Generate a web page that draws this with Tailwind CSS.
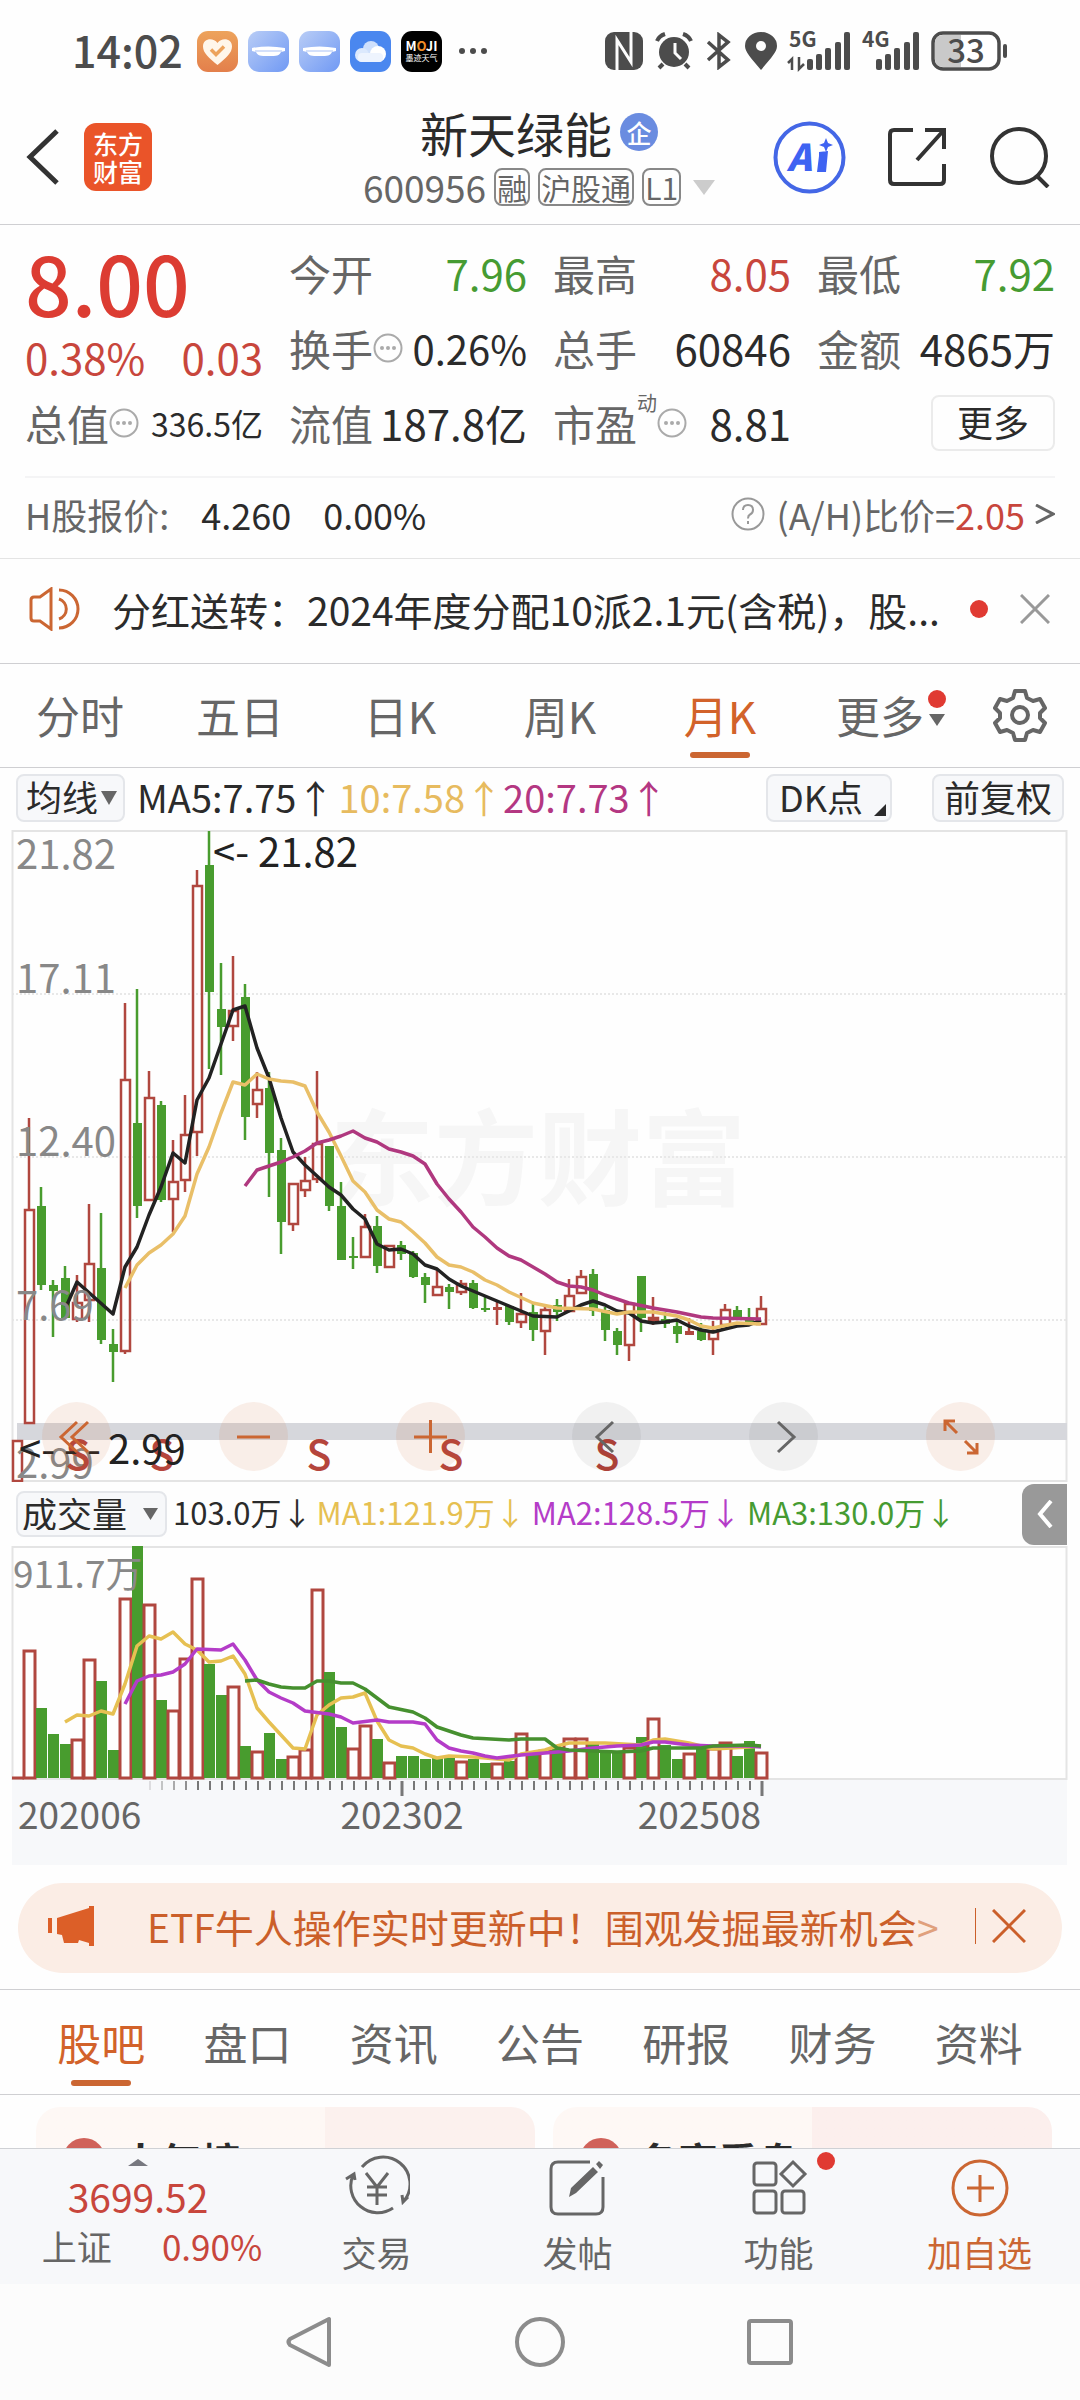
<!DOCTYPE html>
<html lang="zh-CN">
<head>
<meta charset="utf-8">
<meta name="viewport" content="width=device-width, initial-scale=1">
<title>新天绿能 600956</title>
<script src="https://cdn.jsdelivr.net/npm/@tailwindcss/browser@4"></script>
</head>
<body class="flex min-h-screen flex-col bg-[#fefefe] font-['Noto_Sans_CJK_SC',sans-serif] text-[#2b2b2b]">

<!-- Status bar -->
<div class="flex h-[102px] items-center justify-between pl-[72px] pr-[72px] text-[#4c4c4c]">
  <div class="flex items-center gap-[10px]">
    <span class="mr-1 pb-1 text-[43px] leading-[50px] font-medium">14:02</span>
    <svg class="size-[41px]" viewBox="0 0 41 41"><defs><linearGradient id="or" x2="0" y2="1"><stop stop-color="#eda35c"/><stop offset="1" stop-color="#e37f4b"/></linearGradient></defs><rect width="41" height="41" rx="11" fill="url(#or)"/><path d="M20.500 34C12 27 6 22 6 15.500c0-8 10-9.500 14.500-3.500C25 6 35 7.500 35 15.500 35 22 29 27 20.500 34Z" fill="#fff6ea"/><path d="m14 18.500 5 5 8-8" fill="none" stroke="#eda35c" stroke-width="3.500"/></svg>
    <svg class="size-[41px]" viewBox="0 0 41 41"><defs><linearGradient id="bl" x2="1" y2="1"><stop stop-color="#b9cdf6"/><stop offset="1" stop-color="#7099f4"/></linearGradient></defs><rect width="41" height="41" rx="11" fill="url(#bl)"/><path d="M4 17c11-2 22-2 33 0v3l-4 1c-2 4-4 4-12.500 4S10 25 8 21l-4-1Z" fill="#fff"/><path d="M7 20h27" stroke="#a9c1f5" stroke-width="1"/></svg>
    <svg class="size-[41px]" viewBox="0 0 41 41"><rect width="41" height="41" rx="11" fill="url(#bl)"/><path d="M4 17c11-2 22-2 33 0v3l-4 1c-2 4-4 4-12.500 4S10 25 8 21l-4-1Z" fill="#fff"/><path d="M7 20h27" stroke="#a9c1f5" stroke-width="1"/></svg>
    <svg class="size-[41px]" viewBox="0 0 41 41"><rect width="41" height="41" rx="11" fill="#4a87ef"/><circle cx="21" cy="18" r="8" fill="#cfe0fc"/><circle cx="12" cy="24" r="7" fill="#dce9fd"/><circle cx="28" cy="23" r="8" fill="#fff"/><rect x="8" y="22" width="25" height="9" rx="4" fill="#eef4fe"/></svg>
    <svg class="size-[41px]" viewBox="0 0 41 41"><rect width="41" height="41" rx="11" fill="#000"/><text x="20.500" y="20" text-anchor="middle" font-size="13" font-weight="700" fill="#fff">M<tspan fill="#f08c28">O</tspan>JI</text><text x="20.500" y="30" text-anchor="middle" font-size="8" fill="#fff">墨迹天气</text></svg>
    <svg class="ml-1 h-2 w-9" viewBox="0 0 36 8" fill="#4c4c4c"><circle cx="6" cy="4" r="3"/><circle cx="17" cy="4" r="3"/><circle cx="28" cy="4" r="3"/></svg>
  </div>
  <div class="flex items-center gap-3">
    <svg class="h-[38px] w-[38px]" viewBox="0 0 38 38"><rect width="38" height="38" rx="9" fill="#4c4c4c"/><path d="M12 38V8l14 22V0" fill="none" stroke="#fdfdfd" stroke-width="3"/></svg>
    <svg class="h-[38px] w-[38px]" viewBox="0 0 38 38" fill="none" stroke="#4c4c4c"><circle cx="19" cy="20" r="15" fill="#4c4c4c" stroke="none"/><path d="M2 9Q4 4 10 2M36 9Q34 4 28 2M8 32l-4 4M30 32l4 4" stroke-width="4"/><path d="M20 11v10l6 6" stroke="#fdfdfd" stroke-width="3"/></svg>
    <svg class="h-[38px] w-[28px]" viewBox="0 0 28 38" fill="none" stroke="#4c4c4c" stroke-width="3.500"><path d="m3 10 20 18-9 7V3l9 7L3 28"/></svg>
    <svg class="h-[38px] w-[32px]" viewBox="0 0 32 38"><path d="M16 38C6 26 0 20 0 14a16 14 0 0 1 32 0c0 6-6 12-16 24Z" fill="#4c4c4c"/><circle cx="16" cy="14" r="5" fill="#fdfdfd"/></svg>
    <svg class="h-[40px] w-[61px] overflow-visible" viewBox="0 0 61 40" fill="#4c4c4c"><text x="0" y="16" font-size="21" font-weight="700">5G</text><path d="M3 39V28l-4 4M10 26v12l5-5" fill="none" stroke="#4c4c4c" stroke-width="2.500"/><rect x="18" y="28" width="6" height="11" rx="2"/><rect x="27" y="23" width="6" height="16" rx="2"/><rect x="36" y="17" width="6" height="22" rx="2"/><rect x="46" y="11" width="6" height="28" rx="2"/><rect x="55" y="1" width="6" height="38" rx="2"/></svg>
    <svg class="h-[40px] w-[57px] overflow-visible" viewBox="0 0 57 40" fill="#4c4c4c"><text x="0" y="16" font-size="21" font-weight="700">4G</text><rect x="14" y="28" width="6" height="11" rx="2"/><rect x="23" y="23" width="6" height="16" rx="2"/><rect x="32" y="17" width="6" height="22" rx="2"/><rect x="42" y="11" width="6" height="28" rx="2"/><rect x="51" y="1" width="6" height="38" rx="2"/></svg>
    <svg class="h-[40px] w-[77px] overflow-visible" viewBox="0 0 77 40"><rect x="2" y="2" width="66" height="36" rx="10" fill="#fff" stroke="#4c4c4c" stroke-width="3.500"/><path d="M12 4h18v32H12q-8 0-8-8V12q0-8 8-8Z" fill="#c9c9c9"/><text x="35" y="32" text-anchor="middle" font-size="33" font-weight="500" fill="#4c4c4c">33</text><rect x="72" y="13" width="4" height="14" rx="2" fill="#4c4c4c"/></svg>
  </div>
</div>

<!-- Header -->
<header class="grid grid-cols-[1fr_auto_1fr] items-center border-b border-[#cfcfd2] pb-3 pl-[26px] pr-[28px]">
  <div class="flex items-center gap-6">
    <button aria-label="返回"><svg class="h-[56px] w-[34px]" viewBox="0 0 34 56" fill="none" stroke="#333" stroke-width="5"><path d="M31 2 4 28l27 26"/></svg></button>
    <a href="#" class="flex size-[68px] flex-col items-center justify-center rounded-xl bg-[#ea5429] text-[25px] leading-[28px] font-medium text-white"><span>东方</span><span>财富</span></a>
  </div>
  <div class="flex flex-col items-center">
    <h1 class="flex items-center gap-2 text-[48px] leading-[60px]">新天绿能<span class="flex size-[38px] items-center justify-center rounded-full bg-[#6a8ce0] text-[25px] leading-none font-medium text-white">企</span></h1>
    <button class="flex items-center gap-2 text-[37px] leading-[50px] text-[#666]">600956
      <span class="rounded-lg border-2 border-[#888] px-px text-[30px] leading-[34px]">融</span>
      <span class="rounded-lg border-2 border-[#888] px-px text-[30px] leading-[34px]">沪股通</span>
      <span class="rounded-lg border-2 border-[#888] px-px text-[30px] leading-[34px]">L1</span>
      <svg class="ml-1 h-[15px] w-[22px]" viewBox="0 0 22 15" fill="#ccc"><path d="M0 0h22L11 15Z"/></svg>
    </button>
  </div>
  <div class="flex items-center justify-end gap-[42px]">
    <button aria-label="Ai"><svg class="size-[73px]" viewBox="0 0 73 73"><circle cx="36.500" cy="36.500" r="34" fill="#fff" stroke="#4467e6" stroke-width="4"/><text x="14" y="50" font-family="Noto Sans CJK SC" font-size="37" font-weight="900" font-style="italic" fill="#3f63f2">A</text><path d="m46 31 9-1-2 21h-9l2-16Zm7-14 2 5 5 2-5 2-2 5-2-5-5-2 5-2Z" fill="#3f63f2"/></svg></button>
    <button aria-label="分享"><svg class="size-[60px]" viewBox="0 0 60 60" fill="none" stroke="#333" stroke-width="4"><path d="M25 3H6q-4 0-4 4v46q0 4 4 4h46q4 0 4-4V37M37 3h19v19M56 3 29 33"/></svg></button>
    <button aria-label="搜索"><svg class="size-[62px]" viewBox="0 0 62 62" fill="none" stroke="#333" stroke-width="4"><circle cx="29" cy="30" r="27"/><path d="m47 50 11 11"/></svg></button>
  </div>
</header>

<!-- Quote -->
<section class="px-[25px] pt-[10px]">
  <dl class="grid auto-rows-[75px] grid-cols-4 items-center gap-x-[26px] pb-4 text-[42px] leading-[60px] text-[#666]">
    <div class="row-span-2 flex flex-col pt-1 text-[#c8463c]">
      <dd class="text-[82px] leading-[90px] font-medium text-[#dc3c32]">8.00</dd>
      <dd class="flex justify-between"><span>0.38%</span><span>0.03</span></dd>
    </div>
    <div class="flex justify-between"><dt>今开</dt><dd class="text-[#469b32]">7.96</dd></div>
    <div class="flex justify-between"><dt>最高</dt><dd class="text-[#c8463c]">8.05</dd></div>
    <div class="flex justify-between"><dt>最低</dt><dd class="text-[#469b32]">7.92</dd></div>
    <div class="flex justify-between whitespace-nowrap"><dt class="flex items-center">换手<svg class="size-[30px]" viewBox="0 0 30 30" fill="#aaa"><circle cx="15" cy="15" r="13.500" fill="none" stroke="#aaa" stroke-width="2"/><circle cx="9" cy="15" r="2"/><circle cx="15" cy="15" r="2"/><circle cx="21" cy="15" r="2"/></svg></dt><dd class="text-[40px] text-[#2b2b2b]">0.26%</dd></div>
    <div class="flex justify-between"><dt>总手</dt><dd class="text-[#2b2b2b]">60846</dd></div>
    <div class="flex justify-between"><dt>金额</dt><dd class="text-[#2b2b2b]">4865万</dd></div>
    <div class="flex items-center justify-between whitespace-nowrap"><dt class="flex items-center">总值<svg class="size-[30px]" viewBox="0 0 30 30" fill="#aaa"><circle cx="15" cy="15" r="13.500" fill="none" stroke="#aaa" stroke-width="2"/><circle cx="9" cy="15" r="2"/><circle cx="15" cy="15" r="2"/><circle cx="21" cy="15" r="2"/></svg></dt><dd class="text-[32px] text-[#2b2b2b]">336.5亿</dd></div>
    <div class="flex justify-between whitespace-nowrap"><dt>流值</dt><dd class="text-[#2b2b2b]">187.8亿</dd></div>
    <div class="flex justify-between"><dt class="flex items-center">市盈<span class="self-start text-[20px] leading-[20px]">动</span><svg class="size-[30px]" viewBox="0 0 30 30" fill="#aaa"><circle cx="15" cy="15" r="13.500" fill="none" stroke="#aaa" stroke-width="2"/><circle cx="9" cy="15" r="2"/><circle cx="15" cy="15" r="2"/><circle cx="21" cy="15" r="2"/></svg></dt><dd class="text-[#2b2b2b]">8.81</dd></div>
    <div class="flex justify-end"><button class="h-[56px] w-[124px] rounded-lg border-2 border-[#ebebeb] pb-1 text-[36px] leading-none text-[#2b2b2b]">更多</button></div>
  </dl>
  <div class="flex h-[82px] items-center justify-between border-t-2 border-[#f4f4f5] pb-2 text-[36px] text-[#666]">
    <p class="flex gap-8">H股报价: <span class="text-[#2b2b2b]">4.260</span><span class="text-[#2b2b2b]">0.00%</span></p>
    <a href="#" class="flex items-center"><svg class="mr-3 size-[34px]" viewBox="0 0 34 34" fill="none" stroke="#999" stroke-width="2"><circle cx="17" cy="17" r="15.500"/><path d="M12 13q0-5 5-5t5 5q0 3-3 4.500-2 1-2 4M17 24v3"/></svg>(A/H)比价=<span class="text-[#c8463c]">2.05</span><svg class="ml-[10px] h-5 w-5" viewBox="0 0 20 20" fill="none" stroke="#666" stroke-width="3"><path d="m1 1 17 9-17 9"/></svg></a>
  </div>
</section>

<!-- Notice -->
<div class="flex h-[106px] items-center border-t border-b border-t-[#e4e4e4] border-b-[#cfcfd2] pb-1 pl-[28px] pr-[30px]">
  <svg class="h-[44px] w-[52px] shrink-0" viewBox="0 0 52 44" fill="none" stroke="#cb6632" stroke-width="3"><path d="M3 13v18q0 3 3 3h6l11 8V2L12 10H6q-3 0-3 3ZM31 3a19 19 0 0 1 0 38M31 12a10.500 10.500 0 0 1 0 20"/></svg>
  <a href="#" class="mr-7 ml-8 flex-1 truncate text-[39px]">分红送转：2024年度分配10派2.1元(含税)，股...</a>
  <span class="mr-8 size-[18px] shrink-0 rounded-full bg-[#e03a32]"></span>
  <button aria-label="关闭公告"><svg class="size-[30px]" viewBox="0 0 30 30" stroke="#999" stroke-width="3"><path d="m1 1 28 28M29 1 1 29"/></svg></button>
</div>

<!-- Period tabs -->
<nav class="flex h-[104px] border-b border-[#cfcfd2] pb-px text-[44px] text-[#666]">
  <a href="#" class="flex flex-4 items-center justify-center">分时</a>
  <a href="#" class="flex flex-4 items-center justify-center">五日</a>
  <a href="#" class="flex flex-4 items-center justify-center">日K</a>
  <a href="#" class="flex flex-4 items-center justify-center">周K</a>
  <a href="#" class="relative flex flex-4 items-center justify-center text-[#d2622a]">月K<span class="absolute bottom-2 h-[6px] w-[60px] rounded-full bg-[#cb6632]"></span></a>
  <a href="#" class="flex flex-4 items-center justify-center"><span class="relative">更多<span class="absolute top-2 left-full ml-1 flex flex-col items-center gap-[6px]"><span class="size-[18px] rounded-full bg-[#e03a32]"></span><svg class="h-3 w-4" viewBox="0 0 16 12" fill="#666"><path d="M0 0h16L8 12Z"/></svg></span></span></a>
  <button aria-label="设置" class="flex flex-3 items-center justify-center"><svg class="size-[54px]" viewBox="0 0 54 54" fill="none" stroke="#666" stroke-width="4" stroke-linejoin="round"><path d="M22 3h10l2 7 6 3 7-2 5 9-5 5v5l5 5-5 9-7-2-6 3-2 7H22l-2-7-6-3-7 2-5-9 5-5v-5l-5-5 5-9 7 2 6-3Z"/><circle cx="27" cy="27" r="8"/></svg></button>
</nav>

<!-- Moving average row -->
<div class="flex h-[62px] items-center pr-4 pb-[2px] pl-4 text-[38px] leading-[44px]">
  <label class="relative mr-3 block h-[48px] w-[109px]"><span class="sr-only">主图指标</span><select class="size-full appearance-none rounded-lg border-2 border-[#e4e6ea] bg-[#f7f8fa] pb-1 pl-2 text-[36px] leading-none"><option>均线</option></select><svg class="pointer-events-none absolute top-[17px] right-2 h-[14px] w-4" viewBox="0 0 16 14" fill="#666"><path d="M0 0h16L8 14Z"/></svg></label>
  <span class="mr-1 pb-[2px]">MA5:7.75↑</span><span class="pb-[2px] text-[#e7bb5f]">10:7.58↑</span><span class="pb-[2px] text-[#b43782]">20:7.73↑</span>
  <button class="relative ml-auto h-[48px] w-[126px] rounded-lg border-2 border-[#e4e6ea] bg-[#f7f8fa] pr-4 pb-1 text-[36px] leading-none">DK点<svg class="absolute right-1 bottom-1 size-3" viewBox="0 0 12 12" fill="#2b2b2b"><path d="M12 0v12H0Z"/></svg></button>
  <button class="ml-10 h-[48px] w-[132px] rounded-lg border-2 border-[#e4e6ea] bg-[#f7f8fa] pb-1 text-[36px] leading-none">前复权</button>
</div>

<!-- Price chart -->
<div class="relative">
  <svg id="price" class="block h-auto w-full" viewBox="0 830 1080 652" font-family="Noto Sans CJK SC" font-size="40">
    <text x="330" y="1198" font-size="104" font-weight="700" fill="#f6f6f6">东方财富</text>
    <path d="M12 994h1055M12 1157h1055M12 1320h1055" stroke="#e8e8e8" stroke-width="2" stroke-dasharray="2 2"/>
    <path d="M12.500 831h1054v650h-1054Z" fill="none" stroke="#e4e4e4" stroke-width="2"/>
    <path d="M17 1423h1050v17H17Z" fill="#d6d7dc"/>
    <g id="candles" stroke-width="2.500"></g>
    <g fill="none" stroke-width="3.500" stroke-linejoin="round">
      <polyline stroke="#222" points="66,1307 77,1282 113,1314 125,1267 137,1247 149,1215 161,1187 173,1153 185,1163 197,1100 209,1078 221,1044 233,1010 245,1006 257,1048 269,1078 281,1118 293,1152 305,1165 329,1187 341,1195 353,1209 365,1219 377,1244 389,1250 401,1249 413,1254 425,1265 437,1269 449,1279 461,1286 485,1296 509,1306 533,1316 557,1317 569,1311 581,1305 593,1301 605,1305 617,1311 629,1313 641,1321 653,1323 665,1322 677,1320 689,1326 701,1330 713,1332 737,1326 749,1325 761,1320"/>
      <polyline stroke="#e9bf68" points="125,1288 137,1265 149,1253 161,1245 173,1234 185,1216 197,1174 209,1147 221,1113 233,1082 245,1085 257,1074 269,1079 281,1081 293,1082 305,1086 317,1112 329,1132 341,1156 353,1181 365,1192 377,1210 389,1219 401,1222 413,1232 425,1243 437,1257 449,1265 461,1267 473,1272 485,1280 497,1285 509,1292 533,1303 557,1308 593,1309 617,1314 629,1312 653,1312 677,1316 689,1320 701,1326 713,1328 737,1323 761,1324"/>
      <polyline stroke="#b0387f" points="245,1186 257,1170 281,1162 293,1157 305,1151 317,1143 329,1140 341,1136 353,1131 365,1138 377,1142 389,1149 401,1152 413,1156 425,1164 437,1184 449,1199 461,1212 473,1227 485,1237 497,1248 509,1256 521,1260 533,1267 545,1274 557,1282 569,1286 581,1287 593,1290 605,1295 629,1303 653,1308 677,1312 701,1317 713,1318 761,1319"/>
    </g>
    <g fill="#888"><text x="16" y="869">21.82</text><text x="16" y="993">17.11</text><text x="16" y="1156">12.40</text><text x="16" y="1320">7.69</text><text x="16" y="1478">2.99</text></g>
    <g fill="#b5453c" font-weight="500" font-size="41" text-anchor="middle"><text x="78" y="1470">S</text><text x="162" y="1470">S</text><text x="319" y="1470">S</text><text x="451" y="1470">S</text><text x="607" y="1470">S</text></g>
    <g fill="#222"><text x="213" y="867">&lt;-<tspan x="258">21.82</tspan></text><text x="19" y="1464">&lt;- - -<tspan x="108">2.99</tspan></text></g>
  </svg>
  <div class="absolute right-[85px] bottom-[11px] left-[42px] flex justify-between">
    <button aria-label="最早" class="rounded-full bg-[#d2622a]/10"><svg class="size-[69px]" viewBox="0 0 69 69" fill="none" stroke="#cb6632" stroke-width="3"><path d="M35 20 19 35l16 15M46 20 30 35l16 15"/></svg></button>
    <button aria-label="缩小" class="rounded-full bg-[#d2622a]/10"><svg class="size-[69px]" viewBox="0 0 69 69" stroke="#cb6632" stroke-width="3"><path d="M18 35h33"/></svg></button>
    <button aria-label="放大" class="rounded-full bg-[#d2622a]/10"><svg class="size-[69px]" viewBox="0 0 69 69" stroke="#cb6632" stroke-width="3"><path d="M18 35h33M34.500 18v33"/></svg></button>
    <button aria-label="左移" class="rounded-full bg-black/5"><svg class="size-[69px]" viewBox="0 0 69 69" fill="none" stroke="#666" stroke-width="3"><path d="M41 20 25 35l16 15"/></svg></button>
    <button aria-label="右移" class="rounded-full bg-black/5"><svg class="size-[69px]" viewBox="0 0 69 69" fill="none" stroke="#666" stroke-width="3"><path d="m29 20 16 15-16 15"/></svg></button>
    <button aria-label="全屏" class="rounded-full bg-[#d2622a]/10"><svg class="size-[69px]" viewBox="0 0 69 69" fill="none" stroke="#cb6632" stroke-width="3"><path d="M19 29V19h10M19 19l12 12M51 41v10H41M51 51 39 39"/></svg></button>
  </div>
</div>

<!-- Volume row -->
<div class="flex h-[64px] items-center pl-4 pr-[13px] text-[31px] leading-[40px] whitespace-nowrap">
  <label class="relative mr-[6px] block h-[46px] w-[151px]"><span class="sr-only">副图指标</span><select class="size-full appearance-none rounded-lg border-2 border-[#e4e6ea] bg-[#f7f8fa] pb-1 pl-[4px] text-[35px] leading-none"><option>成交量</option></select><svg class="pointer-events-none absolute top-[17px] right-[9px] h-3 w-[15px]" viewBox="0 0 15 12" fill="#666"><path d="M0 0h15L7.500 12Z"/></svg></label>
  <span class="mr-1 pb-1">103.0万↓</span><span class="mr-[6px] pb-1 text-[#e6c052]">MA1:121.9万↓</span><span class="mr-[6px] pb-1 text-[#b43cc8]">MA2:128.5万↓</span><span class="pb-1 text-[#469b32]">MA3:130.0万↓</span>
  <button aria-label="展开" class="ml-auto flex h-[61px] w-[45px] items-center justify-center rounded-l-xl bg-[#999]"><svg class="h-[28px] w-4" viewBox="0 0 16 28" fill="none" stroke="#fff" stroke-width="4"><path d="M14 1 3 14l11 13"/></svg></button>
</div>

<!-- Volume chart -->
<svg class="block h-auto w-full" viewBox="0 1546 1080 319" font-family="Noto Sans CJK SC" font-size="37">
  <path d="M12 1780h1055v85H12Z" fill="#f7f8fa"/>
  <path d="M12.500 1547h1054v232h-1054Z" fill="none" stroke="#e4e4e4" stroke-width="2"/>
  <g id="volumes" stroke-width="3"></g>
  <g fill="none" stroke-width="3.500" stroke-linejoin="round">
    <polyline stroke="#e6c052" points="65,1722 77,1715 89,1716 101,1711 113,1714 125,1684 137,1646 149,1636 161,1639 173,1632 185,1644 197,1650 209,1662 221,1661 233,1656 245,1674 257,1708 269,1722 281,1735 293,1748 305,1749 317,1715 329,1705 341,1698 353,1697 365,1693 377,1721 389,1740 401,1746 413,1748 425,1754 437,1758 449,1756 473,1757 509,1760 521,1754 545,1750 557,1746 569,1743 605,1743 641,1745 653,1740 665,1739 689,1743 701,1746 713,1749 749,1747 761,1746"/>
    <polyline stroke="#b43cc8" points="125,1704 137,1681 149,1676 161,1675 173,1672 185,1664 197,1649 221,1650 233,1644 245,1660 257,1680 269,1692 281,1698 293,1703 305,1711 329,1714 341,1717 353,1723 377,1720 389,1722 413,1722 425,1724 437,1740 449,1748 461,1751 473,1753 485,1756 497,1758 521,1755 545,1753 569,1751 593,1748 617,1746 641,1745 653,1742 665,1742 689,1745 713,1746 749,1746 761,1747"/>
    <polyline stroke="#46902f" points="245,1681 257,1680 269,1684 281,1687 293,1688 305,1688 317,1681 329,1681 341,1683 353,1683 365,1689 377,1698 389,1707 413,1712 425,1718 437,1727 461,1735 473,1738 509,1740 521,1739 545,1739 557,1748 569,1750 593,1751 617,1752 641,1751 653,1748 701,1748 713,1746 749,1745 761,1746"/>
  </g>
  <g id="ticks" stroke="#777"></g>
  <text x="13" y="1588" fill="#888">911.7万</text>
  <g fill="#666"><text x="18" y="1829">202006</text><text x="402" y="1829" text-anchor="middle">202302</text><text x="761" y="1829" text-anchor="end">202508</text></g>
</svg>

<!-- Promo banner -->
<div class="mx-[18px] mt-[18px] flex h-[90px] items-center rounded-full bg-[#fbede5] pr-9 pb-1 pl-[30px] text-[39px] text-[#cb5f2a]">
  <svg class="h-[40px] w-[46px] shrink-0" viewBox="0 0 46 40" fill="#dc5f28"><path d="M0 12h4v15H0ZM9 12l32-10V0h5v40h-5v-3l-10-3-1 3H16l-2-8-5-1Z"/></svg>
  <a href="#" class="ml-[53px] flex-1 truncate">ETF牛人操作实时更新中！围观发掘最新机会<span class="text-[#e0a07c]">&gt;</span></a>
  <span class="mx-4 h-9 w-px bg-[#cb5f2a]"></span>
  <button aria-label="关闭"><svg class="size-[34px]" viewBox="0 0 34 34" stroke="#cb5f2a" stroke-width="3"><path d="m1 1 32 32M33 1 1 33"/></svg></button>
</div>

<!-- Content tabs -->
<nav class="mt-4 flex h-[106px] border-y border-[#cfcfd2] px-7 text-[44px] text-[#666]">
  <a href="#" class="relative flex flex-1 items-center justify-center text-[#d2622a]">股吧<span class="absolute bottom-2 h-[6px] w-[60px] rounded-full bg-[#cb6632]"></span></a>
  <a href="#" class="flex flex-1 items-center justify-center">盘口</a>
  <a href="#" class="flex flex-1 items-center justify-center">资讯</a>
  <a href="#" class="flex flex-1 items-center justify-center">公告</a>
  <a href="#" class="flex flex-1 items-center justify-center">研报</a>
  <a href="#" class="flex flex-1 items-center justify-center">财务</a>
  <a href="#" class="flex flex-1 items-center justify-center">资料</a>
</nav>

<!-- Cards cut off by the bottom bar -->
<div class="grid h-[53px] grid-cols-2 items-start gap-[18px] overflow-hidden pt-3 pr-7 pl-9 text-[40px] leading-[44px] font-bold">
  <a href="#" class="flex h-[120px] items-start gap-4 rounded-3xl bg-linear-to-r from-[#fef8f5] from-58% to-[#fcf1ee] to-58% pt-[31px] pl-[27px]"><span class="size-[42px] rounded-full bg-[#d0625a]"></span>人气榜</a>
  <a href="#" class="flex h-[120px] items-start gap-4 rounded-3xl bg-linear-to-r from-[#fef8f5] from-52% to-[#fcefed] to-52% pt-[31px] pl-[27px]"><span class="size-[42px] rounded-full bg-[#d0625a]"></span>名家看盘</a>
</div>

<!-- Bottom bar -->
<footer class="flex h-[136px] border-t border-[#cfd1d5] bg-[#f7f8fa] text-[35px] leading-[44px] text-[#666]">
  <a href="#" class="flex w-[276px] flex-col items-center pt-[10px] text-[#c8463c]">
    <svg class="h-[7px] w-5 shrink-0" viewBox="0 0 20 7" fill="#77787f"><path d="M10 0 20 7H0Z"/></svg>
    <span class="mt-2 text-[39px]">3699.52</span>
    <span class="mt-[6px] ml-7 flex gap-[50px]"><span class="text-[#666]">上证</span>0.90%</span>
  </a>
  <a href="#" class="flex flex-1 flex-col items-center justify-between pt-[6px] pb-[10px]">
    <svg class="size-[66px]" viewBox="0 0 66 66" fill="none" stroke="#666" stroke-width="3"><path d="M18 12a27 27 0 0 1 42 34M49 53A27 27 0 0 1 9 20M2 24l8-5 1 6M58 40l1 7 5-5M22 18l11 14 11-14M23 32h20M23 40h20M33 32v18"/></svg>交易</a>
  <a href="#" class="flex flex-1 flex-col items-center justify-between pt-[6px] pb-[10px]">
    <svg class="size-[66px]" viewBox="0 0 66 66" fill="none" stroke="#666" stroke-width="3"><path d="M45 7H13q-7 0-7 7v38q0 7 7 7h38q7 0 7-7V22"/><path d="M24 42l2-9 22-21 5 5-22 21ZM51 9l3-3 4 4-3 4Z" fill="#666" stroke="none"/></svg>发帖</a>
  <a href="#" class="relative flex flex-1 flex-col items-center justify-between pt-[6px] pb-[10px]">
    <svg class="size-[66px]" viewBox="0 0 66 66" fill="none" stroke="#666" stroke-width="3"><rect x="8" y="8" width="22" height="22" rx="3"/><rect x="8" y="36" width="22" height="22" rx="3"/><rect x="36" y="36" width="22" height="22" rx="3"/><path d="m47 7 12 12-12 12-12-12Z"/></svg>功能
    <span class="absolute top-[3px] right-[44px] size-[18px] rounded-full bg-[#e03a32]"></span></a>
  <a href="#" class="flex flex-1 flex-col items-center justify-between pt-[6px] pb-[10px] text-[#cb6632]">
    <svg class="size-[66px]" viewBox="0 0 66 66" fill="none" stroke="#cb6632" stroke-width="3"><circle cx="33" cy="33" r="27"/><path d="M20 33h27M33 20v27"/></svg>加自选</a>
</footer>

<!-- System navigation -->
<div class="flex flex-1 items-center justify-center gap-[178px] bg-[#fcfcfc]">
  <button aria-label="返回"><svg class="size-[52px]" viewBox="0 0 52 52" fill="none" stroke="#8c8c8c" stroke-width="4" stroke-linejoin="round"><path d="M45 3v46L6 29q-3-3 0-6Z"/></svg></button>
  <button aria-label="主页"><svg class="size-[52px]" viewBox="0 0 52 52" fill="none" stroke="#8c8c8c" stroke-width="4"><circle cx="26" cy="26" r="23"/></svg></button>
  <button aria-label="最近"><svg class="size-[52px]" viewBox="0 0 52 52" fill="none" stroke="#8c8c8c" stroke-width="4"><rect x="5" y="5" width="42" height="42" rx="2"/></svg></button>
</div>

<script>
const GREEN = '#489c2e', RED = '#b0473f';
// One row per month: kind (1 up, 0 down, 2 up with a solid body, 3 down on rising volume), high, body top, body bottom, low, volume top
const months = [
[1,1118,1209,1423,1423,1650],[0,1187,1206,1285,1290,1708],[0,1280,1285,1291,1337,1734],[0,1266,1278,1318,1318,1744],[1,1275,1302,1319,1322,1739],
[1,1204,1263,1300,1322,1659],[0,1213,1268,1340,1344,1681],[0,1329,1344,1352,1382,1750],[1,1003,1079,1351,1354,1598],[0,989,1123,1206,1218,1546],
[1,1071,1097,1200,1200,1604],[0,1101,1105,1200,1202,1700],[1,1140,1181,1199,1232,1710],[1,1095,1134,1180,1192,1658],[1,870,885,1132,1156,1578],
[0,831,865,992,1069,1664],[0,963,1009,1027,1075,1695],[1,956,1010,1026,1041,1686],[0,984,997,1117,1140,1746],[1,1072,1089,1104,1118,1751],
[0,1072,1088,1153,1197,1733],[0,1138,1150,1222,1254,1759],[1,1183,1183,1224,1231,1756],[1,1157,1180,1190,1197,1749],[1,1071,1143,1179,1183,1589],
[0,1146,1146,1206,1211,1672],[0,1182,1206,1260,1260,1727],[3,1237,1256,1258,1269,1748],[1,1214,1226,1257,1257,1725],[0,1216,1226,1266,1273,1739],
[1,1245,1245,1267,1267,1762],[0,1241,1245,1254,1260,1756],[0,1251,1253,1277,1278,1756],[0,1273,1277,1285,1303,1759],[1,1268,1286,1295,1295,1758,0],
[0,1284,1287,1292,1309,1757],[1,1280,1283,1292,1295,1761],[0,1280,1283,1308,1309,1759],[0,1296,1308,1310,1312,1763],[2,1301,1307,1310,1325,1763],
[0,1305,1306,1322,1325,1761],[1,1293,1313,1322,1328,1733],[0,1303,1312,1330,1341,1751],[1,1307,1309,1331,1355,1750],[0,1299,1305,1312,1321,1747],
[1,1279,1295,1311,1311,1738],[1,1270,1276,1293,1293,1738],[0,1269,1274,1311,1316,1744],[0,1307,1310,1330,1341,1750],[0,1328,1331,1345,1355,1752],
[1,1303,1303,1345,1361,1747],[0,1276,1276,1318,1332,1737],[1,1297,1317,1320,1325,1718],[0,1312,1319,1324,1328,1745],[0,1322,1326,1334,1343,1759],
[2,1318,1331,1335,1335,1753],[0,1323,1331,1340,1341,1747],[1,1321,1331,1339,1355,1748],[1,1304,1309,1325,1325,1742],[0,1306,1310,1317,1320,1756],
[0,1308,1320,1322,1323,1741],[1,1296,1308,1324,1324,1752]];
let candles = `<rect x="13" y="1441" width="9" height="40" fill="#fefefe" stroke="${RED}"/>`, volumes = '', ticks = '';
months.forEach(([kind, high, top, bottom, low, vol, volUp], i) => {
  const x = 29 + i * 12, down = kind === 0 || kind === 3, color = down ? GREEN : RED;
  candles += `<path d="M${x} ${high}V${top}M${x} ${bottom}V${low}" stroke="${color}"/>`;
  candles += kind === 1
    ? `<rect x="${x - 4}" y="${top + 1}" width="9" height="${bottom - top - 1}" fill="none" stroke="${color}"/>`
    : `<rect x="${x - 4}" y="${top}" width="9" height="${bottom - top}" fill="${color}"/>`;
  const rising = kind === 3 || (kind !== 0 && volUp !== 0);
  volumes += rising
    ? `<rect x="${x - 5}" y="${vol + 1}" width="11" height="${1777 - vol}" fill="#fefefe" stroke="${RED}"/>`
    : `<rect x="${x - 5}" y="${vol}" width="11" height="${1778 - vol}" fill="${GREEN}"/>`;
  if (i >= 10) {
    const major = i === 31 || i === 61;
    ticks += `<path d="M${x + 1} 1781v${major ? 15 : 9}" stroke-width="${major ? 3 : 2}" opacity="${Math.min(1, (i - 9) / 5)}"/>`;
  }
});
document.getElementById('candles').innerHTML = candles;
document.getElementById('volumes').innerHTML = `<path d="M12 1778h12" stroke="${RED}"/>` + volumes;
document.getElementById('ticks').innerHTML = ticks;
</script>
</body>
</html>
